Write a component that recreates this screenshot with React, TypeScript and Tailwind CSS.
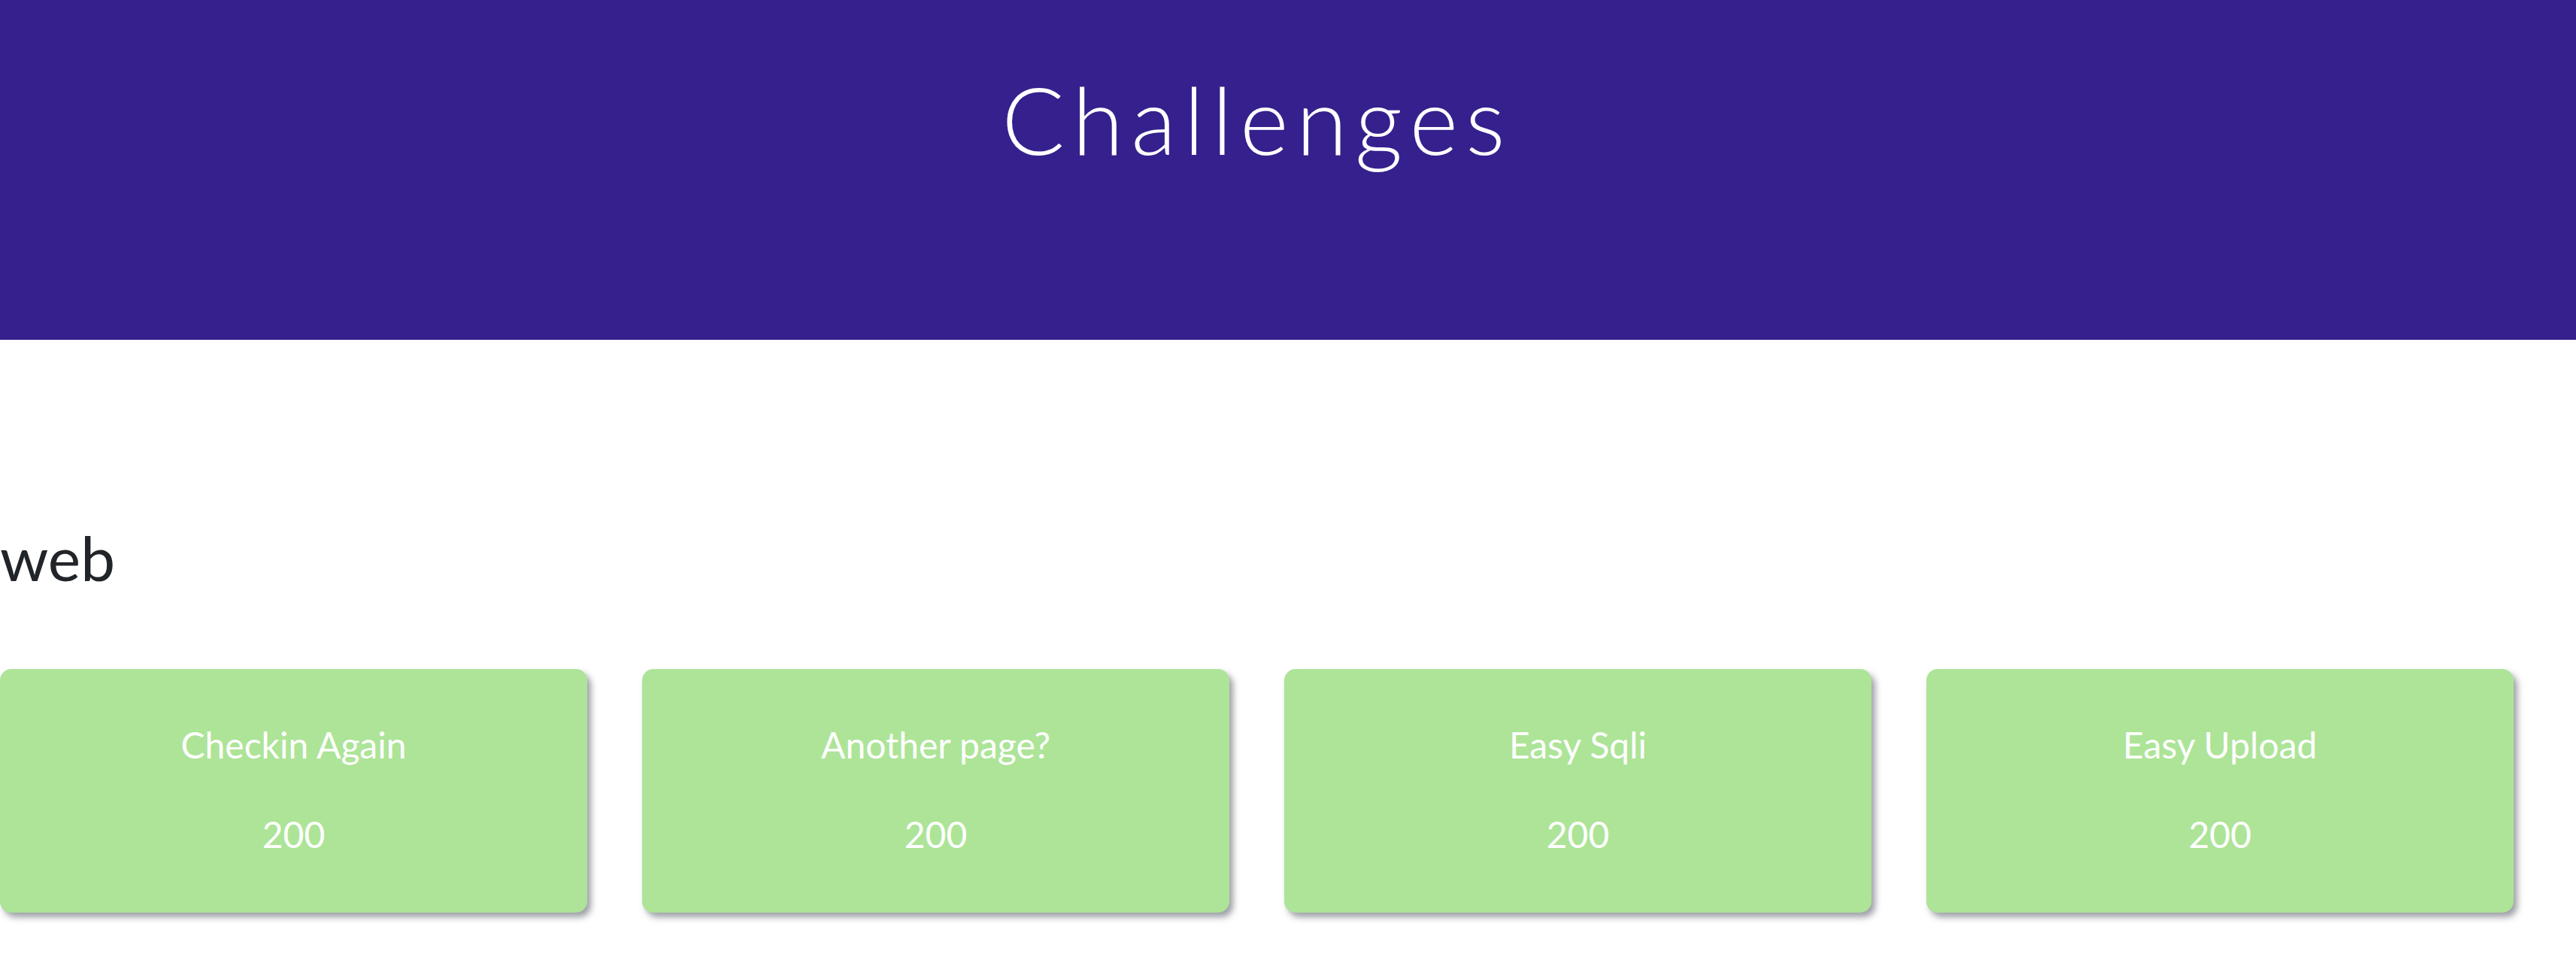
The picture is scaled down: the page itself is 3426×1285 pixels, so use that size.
import React from "react";

const challenges = [
  { name: "Checkin Again", value: 200 },
  { name: "Another page?", value: 200 },
  { name: "Easy Sqli", value: 200 },
  { name: "Easy Upload", value: 200 },
];

export default function App() {
  return (
    <div className="min-h-screen bg-white font-['Lato','Liberation_Sans',sans-serif] text-[#212529]">
      <div className="h-[452px] bg-[#36208d] flex justify-center pt-[84px] pr-[92px]">
        <h1 className="text-white text-[124px] leading-[1.2] font-light tracking-[10px] h-fit pl-[10px]">
          Challenges
        </h1>
      </div>
      <div className="pr-[83px] pt-[240px]">
        <h3 className="text-[82px] leading-[1.2] font-normal">web</h3>
        <div className="grid grid-cols-4 gap-x-[73px] mt-[100px]">
          {challenges.map((c) => (
            <div
              key={c.name}
              className="h-[324px] rounded-[15px] bg-[#ade498] shadow-[5px_6px_8px_rgba(60,64,80,0.5)] flex flex-col items-center text-white text-[48px] leading-none pt-[77px]"
            >
              <div>{c.name}</div>
              <div className="mt-[71px]">{c.value}</div>
            </div>
          ))}
        </div>
      </div>
    </div>
  );
}
